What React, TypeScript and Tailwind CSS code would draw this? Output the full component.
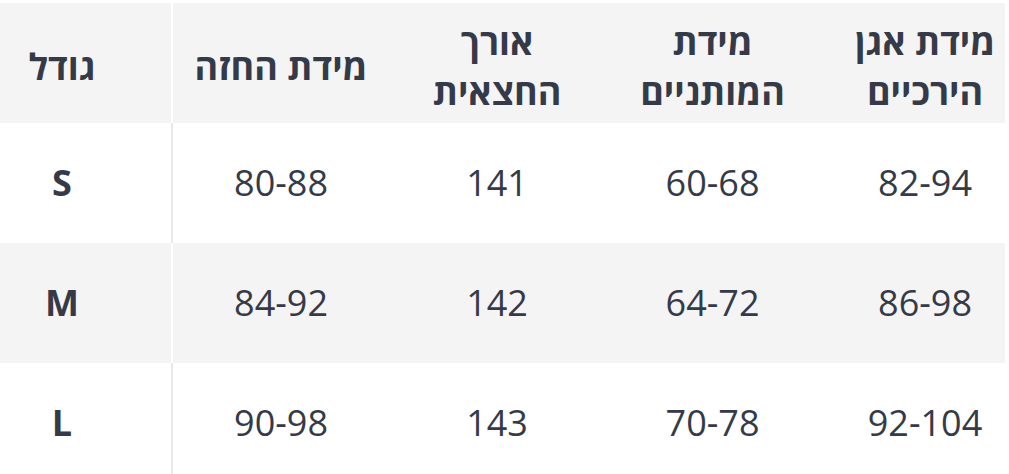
import React from 'react';

const rows = [
  { size: 'S', chest: '80-88', length: '141', waist: '60-68', hips: '82-94' },
  { size: 'M', chest: '84-92', length: '142', waist: '64-72', hips: '86-98' },
  { size: 'L', chest: '90-98', length: '143', waist: '70-78', hips: '92-104' },
];

const grid = 'grid grid-cols-[185px_215px_216px_218px_171px] h-[120px]';

export default function App() {
  return (
    <div
      dir="rtl"
      className="w-[1009px] h-[474px] overflow-hidden bg-white pt-[3px] pr-[4px] text-[#353a48]"
      style={{ fontFamily: '"Open Sans", "Noto Sans", sans-serif' }}
    >
      <div className="w-[1005px]">
        {/* header */}
        <div className={`${grid} bg-[#f4f4f4] font-bold text-[36px] leading-[50px]`}>
          <div className="flex items-center justify-center text-center pl-[25px] pt-[8px]">
            <span>מידת אגן<br />הירכיים</span>
          </div>
          <div className="flex items-center justify-center text-center pt-[8px]">
            <span>מידת<br />המותניים</span>
          </div>
          <div className="flex items-center justify-center text-center pt-[8px]">
            <span>אורך<br />החצאית</span>
          </div>
          <div className="flex items-center justify-center text-center border-l-2 border-white pt-[8px]">
            <span>מידת החזה</span>
          </div>
          <div className="flex items-center justify-center text-center pr-[47px] pt-[8px]">
            <span>גודל</span>
          </div>
        </div>

        {rows.map((r, i) => {
          const gray = i % 2 === 1;
          return (
            <div key={r.size} className={`${grid} text-[36px] ${gray ? 'bg-[#f4f4f4]' : 'bg-white'}`}>
              <div className="flex items-center justify-center pl-[25px]">{r.hips}</div>
              <div className="flex items-center justify-center">{r.waist}</div>
              <div className="flex items-center justify-center">{r.length}</div>
              <div
                className={`flex items-center justify-center border-l-2 ${gray ? 'border-white' : 'border-[#e8e8e8]'}`}
              >
                {r.chest}
              </div>
              <div className="flex items-center justify-center pr-[47px] font-bold">{r.size}</div>
            </div>
          );
        })}
      </div>
    </div>
  );
}
